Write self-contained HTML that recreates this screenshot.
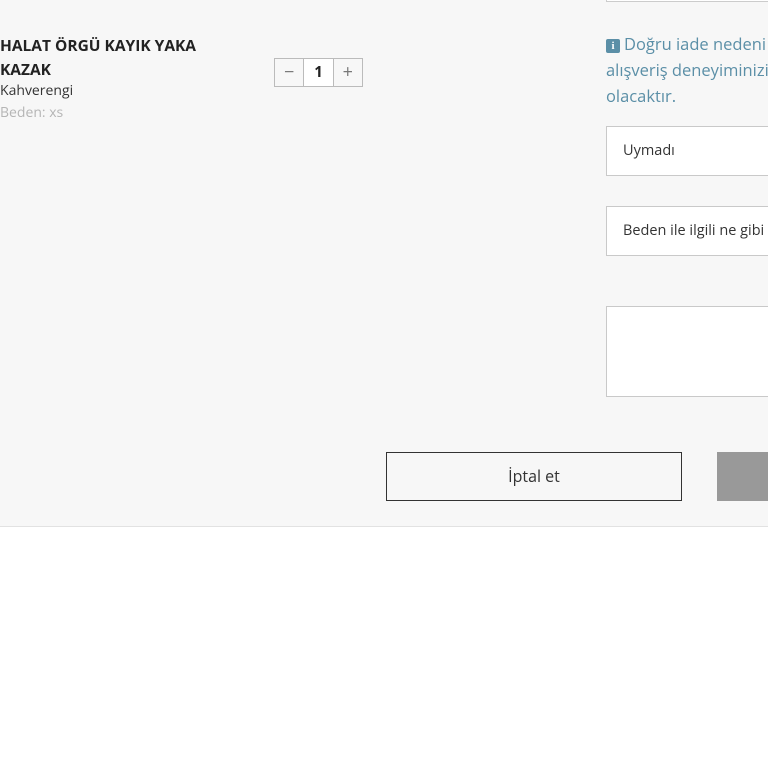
<!DOCTYPE html>
<html><head><meta charset="utf-8"><style>
*{margin:0;padding:0;box-sizing:border-box}
html,body{width:768px;height:768px;overflow:hidden;background:#fff;font-family:"Open Sans","Liberation Sans",sans-serif}
.panel{position:absolute;left:0;top:0;width:768px;height:527px;background:#f7f7f7;border-bottom:1px solid #e2e2e2}
.abs{position:absolute}
.title{left:0;top:33px;font-size:15.5px;font-weight:bold;color:#222;line-height:24px;letter-spacing:0}
.color{left:0;top:81px;font-size:14px;color:#333}
.size{left:0;top:103px;font-size:14px;color:#b5b5b5}
.qty{left:274px;top:58px;width:89px;height:29px;border:1px solid #bbb;display:flex;background:#f7f7f7}
.qty div{flex:1;text-align:center;line-height:27px;font-size:18px;color:#777}
.qty div.n{border-left:1px solid #bbb;border-right:1px solid #bbb;font-size:15px;font-weight:bold;color:#222;background:#fff}
.info{left:606px;top:31px;font-size:16.5px;line-height:26px;color:#5b8fa7;white-space:nowrap}
.ic{display:inline-block;width:14px;height:14px;background:#5b8fa7;color:#fff;font-size:11px;font-weight:bold;text-align:center;line-height:14px;border-radius:2px;vertical-align:1px;margin-right:4px;font-family:"Liberation Serif",serif}
.box{left:606px;width:200px;background:#fff;border:1px solid #c9c9c9;font-size:14.5px;color:#333;padding-left:16px}
.cancel{left:386px;top:452px;width:296px;height:49px;border:1px solid #333;font-size:16px;color:#333;text-align:center;line-height:47px;background:#f7f7f7}
.grey{left:717px;top:452px;width:60px;height:49px;background:#999}
.topbox{left:606px;top:-5px;width:200px;height:7px;border:1px solid #ccc;background:#fff}
</style></head><body>
<div class="panel">
<div class="abs topbox"></div>
<div class="abs title">HALAT ÖRGÜ KAYIK YAKA<br>KAZAK</div>
<div class="abs color">Kahverengi</div>
<div class="abs size">Beden: xs</div>
<div class="abs qty"><div>−</div><div class="n">1</div><div>+</div></div>
<div class="abs info"><span class="ic">i</span>Doğru iade nedeni<br>alışveriş deneyiminizi<br>olacaktır.</div>
<div class="abs box" style="top:126px;height:50px;line-height:48px">Uymadı</div>
<div class="abs box" style="top:206px;height:50px;line-height:48px;white-space:nowrap">Beden ile ilgili ne gibi</div>
<div class="abs box" style="top:306px;height:91px"></div>
<div class="abs cancel">İptal et</div>
<div class="abs grey"></div>
</div>
</body></html>
